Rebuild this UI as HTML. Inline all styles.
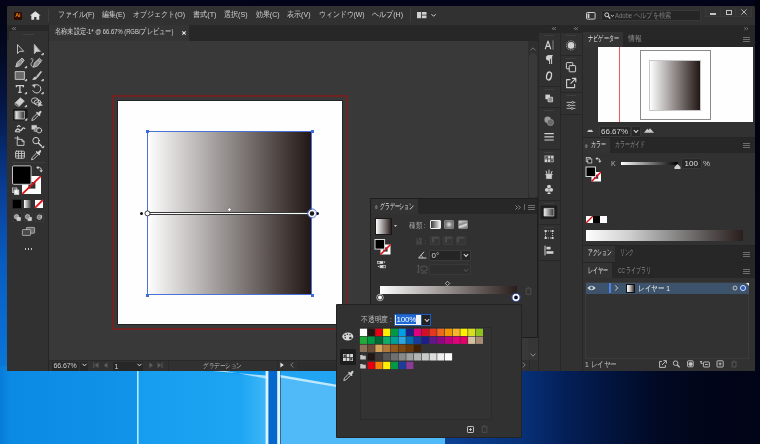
<!DOCTYPE html>
<html lang="ja">
<head>
<meta charset="utf-8">
<title>Adobe Illustrator</title>
<style>
*{box-sizing:border-box;margin:0;padding:0}
html,body{width:760px;height:444px;overflow:hidden;background:#03041a}
body{position:relative;font-family:"Liberation Sans",sans-serif;font-size:8px;color:#d0d0d0;line-height:1}
.a{position:absolute}
.t{position:absolute;white-space:nowrap;line-height:1;font-size:8px;color:#cfcfcf}
svg{position:absolute;overflow:visible}
svg text{font-family:"Liberation Sans",sans-serif}
#root{position:absolute;left:0;top:0;width:760px;height:444px;will-change:transform;opacity:.999}
#wp{left:0;top:0;width:760px;height:444px;background:#02030f}
#wpt{left:0;top:0;width:8px;height:372px;background:linear-gradient(to bottom,#02030f 0,#040c28 60px,#06194a 110px,#0a3f96 190px,#0a5cc0 260px,#0a70d6 340px,#0a7ad8 372px)}
#wptop{left:0;top:0;width:760px;height:7px;background:#03041a}
#wprt{left:754px;top:0;width:6px;height:372px;background:linear-gradient(to bottom,#02030f,#030518)}
#app{left:7px;top:6px;width:748px;height:365px;background:#323232;border-radius:2px 2px 0 0}
#menubar{left:7px;top:6px;width:748px;height:19px;background:#323232;border-radius:2px 2px 0 0}
#strip{left:7px;top:25px;width:748px;height:16px;background:#282828}
#canvas{left:49px;top:41px;width:479px;height:319px;background:#3a3a3a}
#doctab{left:49px;top:25px;width:140px;height:16px;background:#353535}
#tools{left:9px;top:25px;width:39px;height:346px;background:#323232}
#toolhead{left:9px;top:25px;width:39px;height:6px;background:#282828}
#status{left:49px;top:360px;width:489px;height:11px;background:#323232}
#bleed{left:111.7px;top:94.7px;width:236.6px;height:235px;border:2px solid #702424}
#art{left:118px;top:101px;width:224px;height:223.4px;background:#fff;box-shadow:0 0 0 .7px #1c1c1c}
#grect{left:147px;top:131px;width:165.4px;height:164.4px;border:1px solid #4a74d8;background:linear-gradient(to right,#ffffff,#231815)}
.hd{width:2.8px;height:2.8px;background:#3f6ce0}
#gline{left:147px;top:212.1px;width:166px;height:2.6px;background:#fff;border-top:.6px solid #3a3a3a;border-bottom:.6px solid #3a3a3a}
.dot{width:3px;height:3px;border-radius:50%;background:#111}
#vscroll{left:528px;top:41px;width:10px;height:319px;background:#303030}
#dockbg{left:538px;top:25px;width:44px;height:346px;background:#323232}
#rp{left:582px;top:25px;width:173px;height:346px;background:#323232}
.tabbar{position:absolute;background:#282828}
.tabon{position:absolute;background:#343434}
.burger{position:absolute;width:7px;height:5px;border-top:1px solid #6f6f6f;border-bottom:1px solid #6f6f6f}
.burger:after{content:"";position:absolute;left:0;top:1px;width:7px;height:1px;background:#6f6f6f}
.field{position:absolute;background:#282828;border:1px solid #393939;border-radius:1px}
.sw{position:absolute;width:7.2px;height:7.2px}
</style>
</head>
<body>
<div id="root">
<div id="wp" class="a"></div>
<div id="wpt" class="a"></div>
<svg style="left:0;top:366px" width="760" height="78" viewBox="0 366 760 78">
 <defs>
  <linearGradient id="w1" x1="0" x2="1" y1="0" y2="0"><stop offset="0" stop-color="#0a7cd9"/><stop offset=".08" stop-color="#0c8be5"/><stop offset="1" stop-color="#1395eb"/></linearGradient>
  <linearGradient id="w2" x1="0" x2="1" y1="0" y2="0"><stop offset="0" stop-color="#179ef0"/><stop offset=".8" stop-color="#1ea6f4"/><stop offset="1" stop-color="#3fb8f8"/></linearGradient>
  <linearGradient id="w4" x1="0" x2="1" y1="0" y2="0"><stop offset="0" stop-color="rgb(12,66,150)"/><stop offset="0.2413" stop-color="rgb(8,50,122)"/><stop offset="0.3873" stop-color="rgb(5,32,88)"/><stop offset="0.5397" stop-color="rgb(3,20,60)"/><stop offset="0.6889" stop-color="rgb(2,10,36)"/><stop offset="0.8381" stop-color="rgb(2,6,26)"/><stop offset="1" stop-color="rgb(3,5,24)"/></linearGradient>
 </defs>
 <rect x="0" y="366" width="138" height="78" fill="url(#w1)"/>
 <rect x="138" y="366" width="128" height="78" fill="url(#w2)"/>
 <path d="M205 371 L266 371 L266 377.4Z" fill="#0f9af0"/>
 <path d="M212 371 L266 375.6 L266 378.6 L226 371Z" fill="#d4f3ff" opacity=".8"/>
 <rect x="137" y="366" width="1.6" height="78" fill="#b4eaff"/>
 <rect x="265.6" y="366" width="14.6" height="78" fill="#dcf6ff"/>
 <rect x="268.4" y="366" width="8.8" height="78" fill="#0668cc"/>
 <rect x="280.6" y="366" width="165" height="78" fill="#50bbf8"/>
 <path d="M280.6 366 H445.6 V404 L280.6 376Z" fill="#22a6f3"/>
 <path d="M280.6 375 L445.6 403.4 V405.6 L280.6 377.4Z" fill="#d4f3ff" opacity=".85"/>
 <rect x="445" y="366" width="315" height="78" fill="url(#w4)"/>
</svg>
<div id="wptop" class="a"></div>
<div id="wprt" class="a"></div>
<div id="app" class="a"></div>
<div id="menubar" class="a"></div>
<div id="strip" class="a"></div>
<div id="canvas" class="a"></div>
<div id="bleed" class="a"></div>
<div id="art" class="a"></div>
<div id="grect" class="a"></div>
<div class="a hd" style="left:146px;top:130px"></div>
<div class="a hd" style="left:311px;top:130px"></div>
<div class="a hd" style="left:146px;top:294px"></div>
<div class="a hd" style="left:311px;top:294px"></div>
<div id="gline" class="a"></div>
<div class="a dot" style="left:140px;top:211.9px"></div>
<div class="a dot" style="left:316.4px;top:211.9px"></div>
<svg style="left:142px;top:204px" width="180" height="18" viewBox="0 0 180 18">
 <circle cx="5.5" cy="9.4" r="2.5" fill="#fff" stroke="#2a2a2a" stroke-width=".9"/>
 <circle cx="170" cy="9.4" r="3" fill="#1c1a1a" stroke="#f4f6ff" stroke-width="1.5"/>
 <circle cx="170" cy="9.4" r="4.5" fill="none" stroke="#4468c8" stroke-width=".9"/>
 <rect x="86" y="4.3" width="2.8" height="2.8" transform="rotate(45 87.4 5.7)" fill="#fff" stroke="#555" stroke-width=".5"/>
</svg>
<div id="doctab" class="a"></div>
<div id="tools" class="a"></div>
<div id="toolhead" class="a"></div>
<div id="status" class="a"></div>
<div id="vscroll" class="a"></div>
<div id="dockbg" class="a"></div>
<div id="rp" class="a"></div>

<!-- MENUBAR -->
<div class="a" style="left:14px;top:11.7px;width:8.3px;height:8.2px;background:#2e0b02;border-radius:1.5px"></div>
<div class="t" style="left:15.3px;top:13.2px;font-size:5.5px;font-weight:bold;color:#ff8a10;letter-spacing:-.2px">Ai</div>
<svg style="left:30.3px;top:11px" width="10.6" height="9" viewBox="0 0 11 9"><path d="M5.5 0 L11 4.6 L9.6 4.6 L9.6 9 L6.7 9 L6.7 6 L4.3 6 L4.3 9 L1.4 9 L1.4 4.6 L0 4.6Z" fill="#e2e2e2"/></svg>
<div class="a" style="left:48px;top:9px;width:1px;height:13px;background:#3f3f3f;"></div>
<svg style="left:58px;top:10.2px" width="36.5" height="11"><text x="0" y="7.2" textLength="36.5" lengthAdjust="spacingAndGlyphs" font-size="8" fill="#d2d2d2" >ファイル(F)</text></svg>
<svg style="left:102px;top:10.2px" width="23" height="11"><text x="0" y="7.2" textLength="23" lengthAdjust="spacingAndGlyphs" font-size="8" fill="#d2d2d2" >編集(E)</text></svg>
<svg style="left:133px;top:10.2px" width="52" height="11"><text x="0" y="7.2" textLength="52" lengthAdjust="spacingAndGlyphs" font-size="8" fill="#d2d2d2" >オブジェクト(O)</text></svg>
<svg style="left:192.5px;top:10.2px" width="23.5" height="11"><text x="0" y="7.2" textLength="23.5" lengthAdjust="spacingAndGlyphs" font-size="8" fill="#d2d2d2" >書式(T)</text></svg>
<svg style="left:224px;top:10.2px" width="23.5" height="11"><text x="0" y="7.2" textLength="23.5" lengthAdjust="spacingAndGlyphs" font-size="8" fill="#d2d2d2" >選択(S)</text></svg>
<svg style="left:255.5px;top:10.2px" width="23.5" height="11"><text x="0" y="7.2" textLength="23.5" lengthAdjust="spacingAndGlyphs" font-size="8" fill="#d2d2d2" >効果(C)</text></svg>
<svg style="left:287px;top:10.2px" width="23.5" height="11"><text x="0" y="7.2" textLength="23.5" lengthAdjust="spacingAndGlyphs" font-size="8" fill="#d2d2d2" >表示(V)</text></svg>
<svg style="left:318.5px;top:10.2px" width="45.5" height="11"><text x="0" y="7.2" textLength="45.5" lengthAdjust="spacingAndGlyphs" font-size="8" fill="#d2d2d2" >ウィンドウ(W)</text></svg>
<svg style="left:372px;top:10.2px" width="31" height="11"><text x="0" y="7.2" textLength="31" lengthAdjust="spacingAndGlyphs" font-size="8" fill="#d2d2d2" >ヘルプ(H)</text></svg>
<div class="a" style="left:410px;top:9px;width:1px;height:13px;background:#3f3f3f;"></div>
<svg style="left:416.5px;top:11.5px" width="20" height="7" viewBox="0 0 20 7"><rect x="0" y="0" width="4" height="6.2" fill="#d0d0d0"/><rect x="4.8" y="0" width="4.7" height="2.7" fill="#d0d0d0"/><rect x="4.8" y="3.5" width="4.7" height="2.7" fill="#d0d0d0"/><path d="M14.5 2.2 L16.6 4.3 L18.7 2.2" fill="none" stroke="#d0d0d0" stroke-width="1"/></svg>
<svg style="left:585.5px;top:12px" width="10" height="8" viewBox="0 0 10 8"><rect x=".5" y=".5" width="8.6" height="6.6" rx=".8" fill="none" stroke="#cfcfcf" stroke-width="1"/><rect x="1.6" y="1.6" width="1.8" height="4.4" fill="#cfcfcf"/></svg>
<div class="a" style="left:601px;top:10px;width:99.5px;height:10.5px;background:#262626;border:1px solid #3a3a3a;border-radius:1.5px"></div>
<svg style="left:603.5px;top:11.5px" width="11" height="8" viewBox="0 0 11 8"><circle cx="2.8" cy="2.8" r="2" fill="none" stroke="#d6d6d6" stroke-width="1"/><path d="M4.3 4.4 L6.2 6.6" stroke="#d6d6d6" stroke-width="1.3"/><path d="M7 3 L8.4 4.5 L9.8 3" fill="none" stroke="#d6d6d6" stroke-width=".9"/></svg>
<svg style="left:614.5px;top:10.8px" width="56.5" height="10.5"><text x="0" y="6.75" textLength="56.5" lengthAdjust="spacingAndGlyphs" font-size="7.5" fill="#7d7d7d" >Adobe ヘルプを検索</text></svg>
<div class="a" style="left:705px;top:7px;width:15.5px;height:10px;background:#343434;border:1px solid #3a3a3a;border-top:none"></div>
<div class="a" style="left:720.5px;top:7px;width:15.5px;height:10px;background:#343434;border:1px solid #3a3a3a;border-top:none;border-left:none"></div>
<div class="a" style="left:736px;top:7px;width:15.5px;height:10px;background:#343434;border:1px solid #3a3a3a;border-top:none;border-left:none"></div>
<div class="a" style="left:710px;top:13.4px;width:6px;height:1.2px;background:#c4c4c4;"></div>
<div class="a" style="left:725.5px;top:9.8px;width:6.2px;height:4.8px;background:transparent;border:1px solid #c4c4c4"></div>
<svg style="left:741px;top:9px" width="6" height="6" viewBox="0 0 6 6"><path d="M.4 .4 L5.6 5.6 M5.6 .4 L.4 5.6" stroke="#c4c4c4" stroke-width=".9"/></svg>
<svg style="left:54.5px;top:27.3px" width="118.5" height="10.5"><text x="0" y="6.75" textLength="118.5" lengthAdjust="spacingAndGlyphs" font-size="7.5" fill="#d8d8d8" >名称未設定-1* @ 66.67% (RGB/プレビュー)</text></svg>
<svg style="left:182px;top:31px" width="4" height="4" viewBox="0 0 4 4"><path d="M.3 .3 L3.7 3.7 M3.7 .3 L.3 3.7" stroke="#e6e6e6" stroke-width="1.1"/></svg>
<!-- TOOLS -->
<div class="a" style="left:48px;top:25px;width:1px;height:346px;background:#262626;"></div>
<svg style="left:12px;top:27.2px" width="4" height="3.2" viewBox="0 0 5 4"><path d="M2 .4 L.5 2 L2 3.6 M4.5 .4 L3 2 L4.5 3.6" fill="none" stroke="#b0b0b0" stroke-width=".9"/></svg>
<div class="a" style="left:23px;top:34px;width:11px;height:1px;background:#414141;"></div>
<svg style="left:9px;top:25px" width="39" height="240" viewBox="9 25 39 240" fill="none" stroke="#cfcfcf" stroke-width="1" stroke-linejoin="round" stroke-linecap="round">
<path d="M17.5 45 L17.5 53.5 L19.8 51.3 L23.3 51.3 Z" stroke-width=".9"/>
<path d="M34.3 44.6 L34.3 53.8 L36.6 51.4 L40.2 51.4 Z" fill="#cfcfcf" stroke-width=".6"/><path d="M42 54.8 l1.3 0 l0 -1.3z" fill="#adadad"/>
<path d="M16 66.5 L17 62.5 L20.5 59.5 L23 62 L20 65.5 Z M20.8 59.2 L22 58 L24.2 60.2 L23.2 61.6 M16.2 66.3 L19 63.5" stroke-width=".9" fill="#8a8a8a"/><path d="M25.3 67.8 l1.3 0 l0 -1.3z" fill="#adadad"/>
<path d="M33.5 66.8 L34.5 62.8 L38 59.8 L40.5 62.3 L37.5 65.8 Z M38.3 59.5 L39.5 58.3 L41.7 60.5 L40.7 61.9" stroke-width=".9" fill="#8a8a8a"/><path d="M31 59 Q32.5 57.6 33 59.6 Q32.6 62 31.2 63.4 Q30.4 66.6 33.3 66.9" stroke-width=".8"/>
<rect x="15.6" y="71.6" width="8.8" height="7.8" fill="#6b6b6b" stroke-width=".9"/><path d="M25.3 80.8 l1.3 0 l0 -1.3z" fill="#adadad"/>
<path d="M40.8 71.2 L36.6 76.2 L37.8 77.2 L41.6 72 Z" fill="#cfcfcf" stroke-width=".5"/><path d="M36 76.8 Q33.6 77 32.6 79.6 Q35.6 80.2 37.2 77.8 Z" fill="#cfcfcf" stroke-width=".5"/><path d="M42 80.8 l1.3 0 l0 -1.3z" fill="#adadad"/>
<path d="M16.4 87.2 V85.6 H23.4 V87.2 M19.9 85.6 V92.4 M18.2 92.4 H21.6" stroke-width="1.3" stroke-linecap="butt" stroke-linejoin="miter"/><path d="M25.3 93.8 l1.3 0 l0 -1.3z" fill="#adadad"/>
<path d="M34.2 85.4 A4.2 4.2 0 1 1 32.8 90.6" stroke-width="1"/><path d="M32.2 85 L35.4 84.4 L34.6 87.4 Z" fill="#cfcfcf" stroke-width=".4"/><path d="M42 93.8 l1.3 0 l0 -1.3z" fill="#adadad"/>
<path d="M15.4 102.6 L20.4 97.8 L24.4 101 L19.6 106 Z" fill="#cfcfcf" stroke-width=".6"/><path d="M15.8 103 L19.4 106 L17.6 106.2 L15 104.4 Z" fill="#555" stroke-width=".6"/><path d="M25.3 106.8 l1.3 0 l0 -1.3z" fill="#adadad"/>
<ellipse cx="35" cy="100.6" rx="3.6" ry="2.8" stroke-width=".9"/><ellipse cx="37.6" cy="102.4" rx="3.4" ry="2.6" stroke-width=".9"/><path d="M38.6 101.6 L38.6 106.8 L40 105.4 L42.2 105.4 Z" fill="#cfcfcf" stroke-width=".5"/>
<rect x="13" y="109" width="14.6" height="11.6" rx="1" fill="#1c1c1c" stroke="none"/>
<defs><linearGradient id="gt" x1="0" x2="1" y1="0" y2="0"><stop offset="0" stop-color="#f4f4f4"/><stop offset="1" stop-color="#2a2a2a"/></linearGradient></defs>
<rect x="15.4" y="111.2" width="9" height="7.8" fill="url(#gt)" stroke="#d8d8d8" stroke-width=".7"/><path d="M25.6 120.2 l1.3 0 l0 -1.3z" fill="#adadad"/>
<g transform="translate(36.5 115.5)"><path d="M-4.6 4.6 L-4 2.6 L0.6 -2 L2.2 -0.4 L-2.4 4.2 Z" stroke-width=".9"/><path d="M0.4 -3 L3.2 -0.2 M1.6 -1.6 L3.4 -3.6 Q4.8 -4.8 4 -3 L2.4 -1" stroke-width="1.4"/></g>
<path d="M15.4 131.4 Q17 127.6 19.2 129.8 Q20.8 131.6 22.4 128.6 Q23.4 127 24.8 128.6 M17.4 126.6 Q18.6 124.6 20 126.4 M15.6 131.6 L19.6 131.8" stroke-width="1.3"/>
<rect x="32" y="125.4" width="4.6" height="3.8" fill="#cfcfcf" stroke-width=".5"/><rect x="34.6" y="127.6" width="4.6" height="3.8" fill="#8a8a8a" stroke-width=".6"/><circle cx="39.2" cy="130.4" r="2.5" fill="#323232" stroke-width=".9"/>
<path d="M17.6 136.6 V139.2 M15 138 H19 M17.6 139.4 H22 L24 141.4 V145.4 H17.6 Z M22 139.4 V141.4 H24" stroke-width=".9"/>
<circle cx="36" cy="140.6" r="3.2" stroke-width="1"/><path d="M38.4 143 L41.4 146" stroke-width="1.5"/><path d="M42.4 147.6 l1.3 0 l0 -1.3z" fill="#adadad"/>
<rect x="15.6" y="151.2" width="8.8" height="7" rx=".8" stroke-width=".9"/><path d="M18.5 151.2 V158.2 M21.5 151.2 V158.2 M15.6 153.5 H24.4 M15.6 155.9 H24.4" stroke-width=".8"/>
<g transform="translate(36.2 154.8)"><path d="M-4.6 4.6 L-4 2.6 L0.6 -2 L2.2 -0.4 L-2.4 4.2 Z" stroke-width=".9"/><path d="M0.4 -3 L3.2 -0.2 M1.6 -1.6 L3.4 -3.6 Q4.8 -4.8 4 -3 L2.4 -1" stroke-width="1.4"/></g>
</svg>
<div class="a" style="left:12px;top:162px;width:33px;height:1px;background:#3d3d3d;"></div>
<svg style="left:9px;top:163px" width="39" height="34" viewBox="9 163 39 34">
 <rect x="22" y="176" width="19" height="18" fill="#fff"/>
 <rect x="28.4" y="182" width="7" height="6.6" fill="#323232"/>
 <path d="M22.4 193.8 L40.8 176.2" stroke="#e0141c" stroke-width="1.8"/>
 <rect x="12.5" y="165.9" width="18.6" height="18.4" rx="1.2" fill="#000" stroke="#c4c4c4" stroke-width="1"/>
 <path d="M38 167.6 H39.4 Q41.2 167.6 41.2 169.4 V170.6" fill="none" stroke="#cfcfcf" stroke-width="1"/><path d="M38.4 165.8 L36.2 167.6 L38.4 169.4Z M39.4 170.2 L41.2 172.4 L43 170.2Z" fill="#cfcfcf"/>
 <rect x="12.4" y="188" width="4.4" height="4.4" fill="#222" stroke="#cfcfcf" stroke-width=".8"/>
 <rect x="14.4" y="190" width="4.4" height="4.4" fill="#fff" stroke="#cfcfcf" stroke-width=".8"/>
 <circle cx="15.6" cy="191.2" r="2.2" fill="none" stroke="#cfcfcf" stroke-width=".7"/>
</svg>
<div class="a" style="left:12px;top:199px;width:10px;height:10px;background:#262626;border-radius:1px"></div>
<div class="a" style="left:13px;top:200.2px;width:8.2px;height:7.8px;background:#000;"></div>
<div class="a" style="left:24.4px;top:200.2px;width:7.4px;height:7.8px;background:linear-gradient(to right,#fff,#222);"></div>
<div class="a" style="left:35.2px;top:200.2px;width:7.8px;height:7.8px;background:#fff;"></div>
<svg style="left:35.2px;top:200.2px" width="7.8" height="7.8" viewBox="0 0 7.8 7.8"><path d="M0 7.8 L7.8 0" stroke="#e0141c" stroke-width="1.8"/></svg>
<div class="a" style="left:12.6px;top:213px;width:9.6px;height:9.4px;background:#262626;border:1px solid #3a3a3a"></div>
<div class="a" style="left:23.6px;top:213px;width:9.6px;height:9.4px;background:#303030;border:1px solid #3a3a3a"></div>
<div class="a" style="left:34.6px;top:213px;width:9.6px;height:9.4px;background:#303030;border:1px solid #3a3a3a"></div>
<svg style="left:12px;top:213px" width="34" height="10" viewBox="12 213 34 10" stroke="#cfcfcf" stroke-width=".7">
 <circle cx="16.6" cy="216.8" r="2.3" fill="#9a9a9a"/><rect x="17" y="217.4" width="3.4" height="3.2" fill="#cfcfcf"/>
 <rect x="28" y="217.4" width="3.4" height="3.2" fill="#cfcfcf"/><circle cx="27.6" cy="216.8" r="2.3" fill="#8a8a8a"/>
 <circle cx="39.4" cy="217.2" r="2.3" fill="#777"/><path d="M39.4 217.2 h2.2 v-2.2" fill="none"/>
</svg>
<svg style="left:22px;top:227px" width="13" height="9" viewBox="0 0 13 9" stroke="#bdbdbd" stroke-width=".8">
 <rect x="4.4" y=".4" width="8.2" height="5.8" rx=".6" fill="#6a6a6a"/>
 <rect x=".4" y="2.6" width="8.2" height="5.8" rx=".6" fill="#4a4a4a"/>
</svg>
<div class="a" style="left:24.6px;top:248.4px;width:1.6px;height:1.6px;background:#c8c8c8;"></div>
<div class="a" style="left:27.6px;top:248.4px;width:1.6px;height:1.6px;background:#c8c8c8;"></div>
<div class="a" style="left:30.6px;top:248.4px;width:1.6px;height:1.6px;background:#c8c8c8;"></div>
<!-- STATUS BAR -->
<div class="a" style="left:49px;top:360px;width:489px;height:1px;background:#2a2a2a;"></div>
<div class="a" style="left:52px;top:361.5px;width:27px;height:9.5px;background:#282828;"></div>
<div class="t" style="left:53.5px;top:362.3px;font-size:7px;color:#d0d0d0;letter-spacing:-.1px">66.67%</div>
<div class="a" style="left:80px;top:361.5px;width:8px;height:9.5px;background:#282828;"></div>
<svg style="left:81.5px;top:363.3px" width="5" height="4" viewBox="0 0 5 4"><path d="M.5 .8 L2.5 2.9 L4.5 .8" fill="none" stroke="#d8d8d8" stroke-width="1"/></svg>
<svg style="left:92px;top:361.8px" width="72" height="7" viewBox="92 363 72 7" fill="#5e5e5e"><path d="M93.4 363.6 v5.4 h.9 v-5.4z M98.4 363.6 v5.4 L94.8 366.3z M107.4 363.6 v5.4 L103.8 366.3z M149.4 363.6 v5.4 L153 366.3z M157.6 363.6 v5.4 L161.2 366.3z M161.6 363.6 v5.4 h.9 v-5.4z"/></svg>
<div class="a" style="left:112.5px;top:361.5px;width:22px;height:9.5px;background:#282828;"></div>
<div class="t" style="left:114.5px;top:362.6px;font-size:7px;color:#d0d0d0">1</div>
<div class="a" style="left:135px;top:361.5px;width:8px;height:9.5px;background:#282828;"></div>
<svg style="left:136.5px;top:363.3px" width="5" height="4" viewBox="0 0 5 4"><path d="M.5 .8 L2.5 2.9 L4.5 .8" fill="none" stroke="#d8d8d8" stroke-width="1"/></svg>
<div class="a" style="left:168px;top:361px;width:1px;height:10px;background:#2a2a2a;"></div>
<div class="a" style="left:277px;top:361px;width:1px;height:10px;background:#2a2a2a;"></div>
<svg style="left:202.5px;top:361.5px" width="39" height="10"><text x="0" y="6.3" textLength="39" lengthAdjust="spacingAndGlyphs" font-size="7" fill="#bdbdbd" >グラデーション</text></svg>
<svg style="left:280px;top:362px" width="4" height="6" viewBox="0 0 4 6"><path d="M.4 .4 V5.6 L3.8 3Z" fill="#e0e0e0"/></svg>
<svg style="left:290px;top:362px" width="4" height="6" viewBox="0 0 4 6"><path d="M3.2 .6 L.8 3 L3.2 5.4" fill="none" stroke="#8a8a8a" stroke-width=".9"/></svg>
<div class="a" style="left:297px;top:361.5px;width:232px;height:9.5px;background:#2e2e2e;"></div>
<!-- DOCK -->
<div class="a" style="left:528.6px;top:53px;width:8.8px;height:145px;background:#3a3a3a;border-radius:4.4px"></div>
<svg style="left:530px;top:47px" width="6" height="4" viewBox="0 0 6 4"><path d="M.5 3.4 L3 .8 L5.5 3.4" fill="none" stroke="#7a7a7a" stroke-width=".9"/></svg>
<div class="a" style="left:538px;top:25px;width:44px;height:7px;background:#282828;"></div>
<div class="a" style="left:537.5px;top:25px;width:1px;height:346px;background:#282828;"></div>
<div class="a" style="left:559.5px;top:32px;width:1px;height:339px;background:#282828;"></div>
<div class="a" style="left:581.5px;top:32px;width:1px;height:339px;background:#282828;"></div>
<svg style="left:551.5px;top:27.2px" width="4" height="3.2" viewBox="0 0 5 4"><path d="M2 .4 L.5 2 L2 3.6 M4.5 .4 L3 2 L4.5 3.6" fill="none" stroke="#b0b0b0" stroke-width=".9"/></svg>
<svg style="left:573.5px;top:27.2px" width="4" height="3.2" viewBox="0 0 5 4"><path d="M2 .4 L.5 2 L2 3.6 M4.5 .4 L3 2 L4.5 3.6" fill="none" stroke="#b0b0b0" stroke-width=".9"/></svg>
<div class="a" style="left:538px;top:32px;width:21.5px;height:1px;background:#282828;"></div>
<div class="a" style="left:544px;top:34.5px;width:10px;height:1px;background:#3f3f3f;"></div>
<div class="a" style="left:538px;top:86px;width:21.5px;height:1px;background:#282828;"></div>
<div class="a" style="left:544px;top:88.5px;width:10px;height:1px;background:#3f3f3f;"></div>
<div class="a" style="left:538px;top:107px;width:21.5px;height:1px;background:#282828;"></div>
<div class="a" style="left:544px;top:109.5px;width:10px;height:1px;background:#3f3f3f;"></div>
<div class="a" style="left:538px;top:149px;width:21.5px;height:1px;background:#282828;"></div>
<div class="a" style="left:544px;top:151.5px;width:10px;height:1px;background:#3f3f3f;"></div>
<div class="a" style="left:538px;top:200px;width:21.5px;height:1px;background:#282828;"></div>
<div class="a" style="left:544px;top:202.5px;width:10px;height:1px;background:#3f3f3f;"></div>
<div class="a" style="left:538px;top:224px;width:21.5px;height:1px;background:#282828;"></div>
<div class="a" style="left:544px;top:226.5px;width:10px;height:1px;background:#3f3f3f;"></div>
<div class="a" style="left:538px;top:260px;width:21.5px;height:1px;background:#282828;"></div>
<div class="a" style="left:560px;top:32px;width:21.5px;height:1px;background:#282828;"></div>
<div class="a" style="left:566px;top:34.5px;width:10px;height:1px;background:#3f3f3f;"></div>
<div class="a" style="left:560px;top:55px;width:21.5px;height:1px;background:#282828;"></div>
<div class="a" style="left:566px;top:57.5px;width:10px;height:1px;background:#3f3f3f;"></div>
<div class="a" style="left:560px;top:92px;width:21.5px;height:1px;background:#282828;"></div>
<div class="a" style="left:566px;top:94.5px;width:10px;height:1px;background:#3f3f3f;"></div>
<div class="a" style="left:560px;top:114px;width:21.5px;height:1px;background:#282828;"></div>
<svg style="left:538px;top:32px" width="44" height="232" viewBox="538 32 44 232" fill="none" stroke="#d2d2d2" stroke-width="1" stroke-linejoin="round">
<path d="M545.2 49.2 L548 41 L550.8 49.2 M546.2 46.4 H549.8" stroke-width="1.1"/><path d="M553 40.4 V49.6" stroke-width=".7" stroke="#a8a8a8"/>
<path d="M549.6 55.6 V64 M551.6 55.6 V64 M552.6 55.6 H548.6 A2.3 2.3 0 0 0 548.6 60.2 H549.6" stroke-width="1" fill="#d2d2d2"/>
<ellipse cx="549" cy="76" rx="2.4" ry="4" transform="rotate(12 549 76)" stroke-width="1.3"/>
<rect x="545.4" y="94.6" width="4.6" height="4.6" fill="#d2d2d2" stroke="none"/><rect x="548" y="97.2" width="4.6" height="4.6" fill="#8c8c8c" stroke="#d2d2d2" stroke-width=".8"/>
<circle cx="547.6" cy="119.8" r="3.2" fill="#9a9a9a" stroke="none"/><circle cx="550.4" cy="122.4" r="3.2" fill="#6a6a6a" stroke="#aaa" stroke-width=".5"/>
<path d="M544.4 133.6 H553.8 M544.4 136.8 H553.8 M544.4 140 H553.8" stroke-width="1.2"/>
<rect x="544.6" y="155.6" width="9" height="6.6" fill="#d2d2d2" stroke="none"/><path d="M547.6 155.6 v6.6 M550.6 155.6 v6.6 M544.6 158.9 h9" stroke="#333" stroke-width=".7"/><rect x="545.2" y="156.2" width="2" height="2.2" fill="#555" stroke="none"/><rect x="551" y="159.4" width="2" height="2.2" fill="#555" stroke="none"/>
<path d="M546.4 174.6 H551.6 V178.6 H546.4 Z" fill="#d2d2d2" stroke-width=".6"/><path d="M549 174.4 V169.6 M547.2 174.2 L546 170.8 M550.8 174.2 L552.2 171" stroke-width="1"/><path d="M545.4 174.6 H552.6" stroke-width="1"/>
<circle cx="549" cy="186.6" r="1.9" fill="#d2d2d2" stroke="none"/><circle cx="546.8" cy="189.8" r="1.9" fill="#d2d2d2" stroke="none"/><circle cx="551.2" cy="189.8" r="1.9" fill="#d2d2d2" stroke="none"/><path d="M549 189 L549 193 M547.4 193.4 H550.6" stroke-width="1.1"/>
<rect x="540.6" y="205.4" width="16.6" height="13.6" rx="1" fill="#1e1e1e" stroke="none"/>
<defs><linearGradient id="gd" x1="0" x2="1" y1="0" y2="0"><stop offset="0" stop-color="#f0f0f0"/><stop offset="1" stop-color="#333"/></linearGradient></defs>
<rect x="544" y="208.4" width="9.8" height="7.6" fill="url(#gd)" stroke="#d0d0d0" stroke-width=".7"/>
<rect x="545.6" y="231" width="7" height="7" stroke-dasharray="1.2 1" stroke-width=".9"/><path d="M544.6 230 h2 v2 h-2z M551.6 230 h2 v2 h-2z M544.6 237 h2 v2 h-2z M551.6 237 h2 v2 h-2z" fill="#d2d2d2" stroke="none"/>
<path d="M545 245.6 V255.4" stroke-width="1"/><rect x="546.4" y="246.8" width="4.2" height="2.6" fill="#d2d2d2" stroke="none"/><rect x="546.4" y="251.2" width="7" height="2.6" fill="#d2d2d2" stroke="none"/>
<circle cx="571" cy="45.4" r="3.3" fill="#d2d2d2" stroke="none"/><circle cx="571" cy="45.4" r="4.6" stroke-width=".8" stroke-dasharray=".9 .9"/>
<rect x="566.4" y="62.6" width="6.4" height="6.2" rx=".6" stroke-width="1"/><rect x="569.2" y="65.6" width="6.4" height="6.2" rx=".6" fill="#323232" stroke-width="1"/>
<path d="M570.4 79.6 H566.6 V87.6 H574.6 V84" stroke-width="1.1"/><path d="M570.6 83.6 L575.4 78.8 M572 78.4 H575.8 V82.2" stroke-width="1.1"/>
<path d="M566.6 102.4 H575.4 M566.6 105.4 H575.4 M566.6 108.4 H575.4" stroke-width=".8"/><circle cx="572.6" cy="102.4" r="1" fill="#323232" stroke-width=".7"/><circle cx="569.2" cy="105.4" r="1" fill="#323232" stroke-width=".7"/><circle cx="572" cy="108.4" r="1" fill="#323232" stroke-width=".7"/>
</svg>
<!-- RIGHT PANELS -->
<div class="a" style="left:582px;top:25px;width:173px;height:7px;background:#282828;"></div>
<svg style="left:743.5px;top:27.2px" width="4.6" height="3.2" viewBox="0 0 6 4"><path d="M.5 .4 L2.3 2 L.5 3.6 M3.3 .4 L5.1 2 L3.3 3.6" fill="none" stroke="#a8a8a8" stroke-width=".8"/></svg>
<div class="tabbar" style="left:582px;top:32px;width:173px;height:15px"></div>
<div class="tabon" style="left:583px;top:32px;width:40px;height:15px"></div>
<svg style="left:587.5px;top:33.7px" width="31" height="10.5"><text x="0" y="6.75" textLength="31" lengthAdjust="spacingAndGlyphs" font-size="7.5" fill="#e6e6e6" >ナビゲーター</text></svg>
<svg style="left:628px;top:33.7px" width="13.5" height="10.5"><text x="0" y="6.75" textLength="13.5" lengthAdjust="spacingAndGlyphs" font-size="7.5" fill="#8f8f8f" >情報</text></svg>
<div class="burger" style="left:743px;top:37px"></div>
<div class="a" style="left:598px;top:47px;width:155px;height:75px;background:#fff;"></div>
<div class="a" style="left:618.5px;top:47px;width:1px;height:75px;background:#ee5a5a;"></div>
<div class="a" style="left:640px;top:50px;width:71px;height:70px;background:#fff;border:1px solid #8c8c8c"></div>
<div class="a" style="left:649px;top:60px;width:52px;height:51px;background:linear-gradient(to right,#ffffff,#231815);border:1px solid #c9c9c9"></div>
<div class="field" style="left:599px;top:126px;width:32px;height:11px"></div>
<div class="t" style="left:601px;top:127.5px;font-size:8px;color:#d8d8d8">66.67%</div>
<div class="field" style="left:631px;top:126px;width:10px;height:11px"></div>
<svg style="left:633px;top:129px" width="6" height="5" viewBox="0 0 6 5"><path d="M.8 1 L3 3.4 L5.2 1" fill="none" stroke="#d8d8d8" stroke-width="1.1"/></svg>
<svg style="left:587px;top:129.4px" width="6.4" height="3" viewBox="0 0 6.4 3"><path d="M0 3 L2 .6 L3.2 1.3 L4.4 .6 L6.4 3Z" fill="#c9c9c9"/></svg>
<svg style="left:644px;top:128.2px" width="10" height="4.8" viewBox="0 0 10 4.8"><path d="M0 4.8 L3.2 .8 L4.6 2 L6 .3 L10 4.8Z" fill="#c9c9c9"/></svg>
<div class="a" style="left:582px;top:137px;width:173px;height:1px;background:#262626;"></div>
<div class="tabbar" style="left:582px;top:138px;width:173px;height:15px"></div>
<div class="tabon" style="left:583px;top:138px;width:27px;height:15px"></div>
<svg style="left:585.2px;top:143.6px" width="2.6" height="4.4" viewBox="0 0 2.6 4.4"><path d="M1.3 .3 L2.3 1.7 H.3Z M1.3 4.1 L2.3 2.7 H.3Z" fill="none" stroke="#a8a8a8" stroke-width=".5"/></svg>
<svg style="left:591px;top:140.1px" width="15" height="10.5"><text x="0" y="6.75" textLength="15" lengthAdjust="spacingAndGlyphs" font-size="7.5" fill="#e6e6e6" >カラー</text></svg>
<svg style="left:615px;top:140.1px" width="30" height="10.5"><text x="0" y="6.75" textLength="30" lengthAdjust="spacingAndGlyphs" font-size="7.5" fill="#8f8f8f" >カラーガイド</text></svg>
<div class="burger" style="left:743px;top:143px"></div>
<div class="t" style="left:611px;top:159.5px;font-size:7px;color:#b5b5b5">K</div>
<div class="a" style="left:621px;top:162px;width:57px;height:2.5px;background:linear-gradient(to right,#fff,#000);"></div>
<svg style="left:674px;top:164px" width="7" height="5" viewBox="0 0 7 5"><path d="M3.5 0 L6.5 3 L6.5 5 L.5 5 L.5 3Z" fill="#d0d0d0"/></svg>
<div class="field" style="left:681px;top:158px;width:21px;height:11px"></div>
<div class="t" style="left:684.5px;top:160px;font-size:8px;color:#e0e0e0">100</div>
<div class="t" style="left:703px;top:160px;font-size:8px;color:#c8c8c8">%</div>
<svg style="left:585px;top:156px" width="20" height="28" viewBox="0 0 20 28">
 <rect x="6.5" y="16" width="9.5" height="9.5" fill="#fff"/>
 <rect x="9.2" y="18.7" width="4" height="4" fill="#323232"/>
 <path d="M6.5 25.5 L16 16" stroke="#e0141c" stroke-width="1.6"/>
 <rect x="1" y="11" width="9.5" height="9.5" fill="#000" stroke="#d8d8d8" stroke-width="1"/>
 <rect x="1.2" y="1.4" width="4" height="4" fill="none" stroke="#cfcfcf" stroke-width=".8"/>
 <rect x="2.8" y="3" width="4" height="4" fill="#222" stroke="#cfcfcf" stroke-width=".8"/>
 <path d="M12 2.6 H13.2 Q14.8 2.6 14.8 4.2 V5.2" fill="none" stroke="#cfcfcf" stroke-width=".9"/><path d="M12.4 1 L10.4 2.6 L12.4 4.2Z M13.2 4.8 L14.8 6.8 L16.4 4.8Z" fill="#cfcfcf"/>
</svg>
<div class="a" style="left:586px;top:216px;width:7px;height:7px;background:#fff;"></div>
<svg style="left:586px;top:216px" width="7" height="7" viewBox="0 0 7 7"><path d="M0 7 L7 0" stroke="#e0141c" stroke-width="1.5"/></svg>
<div class="a" style="left:593px;top:216px;width:7px;height:7px;background:#000;"></div>
<div class="a" style="left:600px;top:216px;width:7px;height:7px;background:#fff;"></div>
<div class="a" style="left:586px;top:229.5px;width:157px;height:11.5px;background:linear-gradient(to right,#ffffff 0%,#cfcfcf 28%,#959494 52%,#5c5857 76%,#2a1f1c 100%);"></div>
<div class="a" style="left:582px;top:245px;width:173px;height:1px;background:#262626;"></div>
<div class="tabbar" style="left:582px;top:246px;width:173px;height:16px"></div>
<div class="tabon" style="left:583px;top:246px;width:32px;height:16px"></div>
<svg style="left:587.6px;top:248.3px" width="23.5" height="10.5"><text x="0" y="6.75" textLength="23.5" lengthAdjust="spacingAndGlyphs" font-size="7.5" fill="#e6e6e6" >アクション</text></svg>
<svg style="left:620px;top:248.3px" width="14" height="10.5"><text x="0" y="6.75" textLength="14" lengthAdjust="spacingAndGlyphs" font-size="7.5" fill="#8f8f8f" >リンク</text></svg>
<div class="burger" style="left:743px;top:252px"></div>
<div class="a" style="left:582px;top:262px;width:173px;height:1.4px;background:#262626;"></div>
<div class="tabbar" style="left:582px;top:263px;width:173px;height:15px"></div>
<div class="tabon" style="left:583px;top:263px;width:29px;height:15px"></div>
<svg style="left:588.2px;top:265.6px" width="20.3" height="10.5"><text x="0" y="6.75" textLength="20.3" lengthAdjust="spacingAndGlyphs" font-size="7.5" fill="#e6e6e6" >レイヤー</text></svg>
<svg style="left:618px;top:265.6px" width="33" height="10.5"><text x="0" y="6.75" textLength="33" lengthAdjust="spacingAndGlyphs" font-size="7.5" fill="#8f8f8f" >CC ライブラリ</text></svg>
<div class="burger" style="left:743px;top:269px"></div>
<div class="a" style="left:585px;top:282px;width:164px;height:77px;background:#333;border:1px solid #3b3b3b"></div>
<div class="a" style="left:586px;top:282.5px;width:163px;height:11px;background:#3d546c;"></div>
<div class="a" style="left:609px;top:283px;width:1.5px;height:10px;background:#4f7fe8;"></div>
<svg style="left:587px;top:285px" width="9" height="6" viewBox="0 0 9 6"><path d="M.3 3 Q4.5 -1.6 8.7 3 Q4.5 7.6 .3 3Z" fill="#d6d6d6"/><circle cx="4.5" cy="3" r="1.4" fill="#3d546c"/></svg>
<svg style="left:614px;top:285px" width="5" height="6" viewBox="0 0 5 6"><path d="M1.2 .6 L3.8 3 L1.2 5.4" fill="none" stroke="#d6d6d6" stroke-width="1"/></svg>
<div class="a" style="left:625.5px;top:283.5px;width:9px;height:9.5px;background:linear-gradient(to right,#fff,#c0bdbd 45%,#3a302e);border:.5px solid #111"></div>
<svg style="left:638px;top:284px" width="32" height="11"><text x="0" y="7.2" textLength="32" lengthAdjust="spacingAndGlyphs" font-size="8" fill="#f0f0f0" >レイヤー 1</text></svg>
<svg style="left:730px;top:283px" width="20" height="10" viewBox="0 0 20 10">
 <circle cx="5" cy="5" r="2" fill="none" stroke="#d0d0d0" stroke-width=".9"/>
 <circle cx="13" cy="5" r="2.6" fill="#2a5fd8" stroke="#e8e8e8" stroke-width=".9"/>
 <path d="M16 0 L19 0 L19 3Z" fill="#e8e8e8"/>
</svg>
<svg style="left:585px;top:360px" width="32" height="11"><text x="0" y="7.2" textLength="32" lengthAdjust="spacingAndGlyphs" font-size="8" fill="#c4c4c4" >1 レイヤー</text></svg>
<svg style="left:659px;top:360px" width="82" height="8" viewBox="0 0 82 8" fill="none" stroke="#c8c8c8" stroke-width=".9">
 <path d="M3 1.4 H.6 V7.4 H6.4 V5 M3 5 L7 1 M4.4 .6 H7.4 V3.6"/>
 <circle cx="16.6" cy="3.2" r="2.3"/><path d="M18.4 5 L20.6 7.4" stroke-width="1.3"/>
 <rect x="28.6" y=".8" width="5.6" height="6" rx=".8"/><circle cx="31.6" cy="4" r="1.6" fill="#c8c8c8"/>
 <path d="M42 1 v2.4 h1.6 M42 1 l-.9 .9 M42 1 l.9 .9"/><rect x="44.4" y="2" width="6" height="5" rx=".6"/><path d="M46 4.5 h2.8"/>
 <rect x="58" y=".8" width="6.2" height="6.2" rx=".6"/><path d="M61.1 2.4 v3 M59.6 3.9 h3"/>
 <path d="M72.6 2 h5 M73.2 2 v5 h3.8 v-5 M74.4 1 h1.6" stroke="#5a5a5a"/>
</svg>
<!-- GRADIENT PANEL -->
<div class="a" style="left:370px;top:197.5px;width:168px;height:140px;background:#1f1f1f;"></div>
<div class="a" style="left:371px;top:198.5px;width:166px;height:138px;background:#323232;"></div>
<div class="tabbar" style="left:371px;top:198.5px;width:166px;height:15.5px"></div>
<div class="tabon" style="left:371px;top:198.5px;width:46.5px;height:15.5px"></div>
<svg style="left:374.6px;top:204.6px" width="2.6" height="4.4" viewBox="0 0 2.6 4.4"><path d="M1.3 .3 L2.3 1.7 H.3Z M1.3 4.1 L2.3 2.7 H.3Z" fill="none" stroke="#a8a8a8" stroke-width=".5"/></svg>
<svg style="left:380px;top:202px" width="34" height="10.5"><text x="0" y="6.75" textLength="34" lengthAdjust="spacingAndGlyphs" font-size="7.5" fill="#e6e6e6" >グラデーション</text></svg>
<svg style="left:515px;top:204.5px" width="6" height="5" viewBox="0 0 6 5"><path d="M.5 .5 L2.5 2.5 L.5 4.5 M3.3 .5 L5.3 2.5 L3.3 4.5" fill="none" stroke="#9a9a9a" stroke-width=".8"/></svg>
<div class="a" style="left:524px;top:204px;width:1px;height:6px;background:#6a6a6a;"></div>
<div class="burger" style="left:528px;top:204.5px"></div>
<div class="a" style="left:374.5px;top:218px;width:17px;height:17px;background:linear-gradient(to right,#ffffff,#2a1f1c);border:.5px solid #1a1a1a"></div>
<svg style="left:393.8px;top:225.4px" width="3" height="2" viewBox="0 0 3 2"><path d="M0 0 H3 L1.5 2Z" fill="#c8c8c8"/></svg>
<svg style="left:409px;top:220.5px" width="16.5" height="10.5"><text x="0" y="6.75" textLength="16.5" lengthAdjust="spacingAndGlyphs" font-size="7.5" fill="#a8a8a8" >種類 :</text></svg>
<div class="a" style="left:430.4px;top:219.6px;width:10.2px;height:9.8px;background:linear-gradient(to right,#3a3a3a,#f2f2f2);border-radius:1px;border:1px solid #ececec"></div>
<div class="a" style="left:444.2px;top:219.6px;width:9.8px;height:9.8px;background:radial-gradient(circle,#e4e4e4 0%,#8a8a8a 55%,#5a5a5a 100%);border-radius:1px;border:1px solid #828282"></div>
<div class="a" style="left:457.8px;top:219.6px;width:9.8px;height:9.8px;background:linear-gradient(160deg,#d8d8d8 0%,#8a8a8a 45%,#e0e0e0 60%,#6a6a6a 100%);border-radius:1px;border:1px solid #828282"></div>
<svg style="left:373px;top:238px" width="20" height="20" viewBox="373 238 20 20">
 <rect x="380.5" y="244.5" width="10" height="10" fill="#fff"/>
 <rect x="383.4" y="247.4" width="4.2" height="4.2" fill="#323232"/>
 <path d="M380.5 254.5 L390.5 244.5" stroke="#e0141c" stroke-width="1.6"/>
 <rect x="375" y="239.5" width="9.6" height="9.6" fill="#000" stroke="#d8d8d8" stroke-width="1"/>
</svg>
<svg style="left:415.5px;top:237px" width="10" height="10.5"><text x="0" y="6.75" textLength="10" lengthAdjust="spacingAndGlyphs" font-size="7.5" fill="#5c5c5c" >線 :</text></svg>
<div class="a" style="left:430.4px;top:235.8px;width:9.6px;height:9px;background:#363636;border-radius:1px;border:1px solid #3e3e3e"></div>
<svg style="left:431.8px;top:237.4px" width="7" height="6" viewBox="0 0 7 6"><path d="M1 5.6 V1 H6.6" fill="none" stroke="#4e4e4e" stroke-width="1.7"/></svg>
<div class="a" style="left:443.2px;top:235.8px;width:9.6px;height:9px;background:#363636;border-radius:1px;border:1px solid #3e3e3e"></div>
<svg style="left:444.6px;top:237.4px" width="7" height="6" viewBox="0 0 7 6"><path d="M1 5.6 V1 H6.6" fill="none" stroke="#4e4e4e" stroke-width="1.7"/></svg>
<div class="a" style="left:456px;top:235.8px;width:9.6px;height:9px;background:#363636;border-radius:1px;border:1px solid #3e3e3e"></div>
<svg style="left:457.4px;top:237.4px" width="7" height="6" viewBox="0 0 7 6"><path d="M1 5.6 V1 H6.6" fill="none" stroke="#4e4e4e" stroke-width="1.7"/></svg>
<svg style="left:418px;top:251px" width="9" height="8" viewBox="0 0 9 8"><path d="M.6 7 L6 .8 M.6 7 H8.4" fill="none" stroke="#cfcfcf" stroke-width="1"/><path d="M4.4 7 A3.6 3.6 0 0 0 3.2 4.2" fill="none" stroke="#cfcfcf" stroke-width=".8"/></svg>
<div class="a" style="left:429px;top:249.5px;width:31.5px;height:11px;background:#262626;border:1px solid #3c3c3c;border-radius:1px"></div>
<div class="t" style="left:431.5px;top:251.5px;font-size:8px;color:#d8d8d8">0&deg;</div>
<div class="a" style="left:461px;top:249.5px;width:10px;height:11px;background:#262626;border:1px solid #3c3c3c;border-radius:1px"></div>
<svg style="left:463px;top:253px" width="6" height="5" viewBox="0 0 6 5"><path d="M.8 1 L3 3.4 L5.2 1" fill="none" stroke="#d8d8d8" stroke-width="1.1"/></svg>
<svg style="left:417px;top:264px" width="11" height="10" viewBox="0 0 11 10" fill="none" stroke="#5a5a5a" stroke-width=".9"><path d="M1.4 1 V9 M.2 2.4 L1.4 1 L2.6 2.4 M.2 7.6 L1.4 9 L2.6 7.6"/><ellipse cx="7" cy="4.6" rx="3.4" ry="2.6"/><path d="M4 9 H10"/></svg>
<div class="a" style="left:429px;top:264px;width:42px;height:11px;background:#2f2f2f;border:1px solid #393939;border-radius:1px"></div>
<svg style="left:463px;top:267.5px" width="6" height="5" viewBox="0 0 6 5"><path d="M.8 1 L3 3.4 L5.2 1" fill="none" stroke="#4c4c4c" stroke-width="1.1"/></svg>
<svg style="left:377px;top:261px" width="10" height="8" viewBox="0 0 10 8" stroke="#cfcfcf" stroke-width=".7">
 <rect x=".4" y=".4" width="2.6" height="2.2" fill="#3a3a3a"/><rect x="3.2" y=".4" width="2.6" height="2.2" fill="#eee"/><path d="M6.4 .6 L8.4 .6 L7.4 2.2Z" fill="#cfcfcf" stroke="none"/>
 <rect x="6" y="4.6" width="2.6" height="2.2" fill="#3a3a3a"/><rect x="3.2" y="4.6" width="2.6" height="2.2" fill="#eee"/><path d="M.6 5.6 L2.4 4.6 L2.4 6.6Z" fill="#cfcfcf" stroke="none"/>
</svg>
<svg style="left:445px;top:281px" width="5" height="5" viewBox="0 0 5 5"><path d="M2.5 .3 L4.7 2.5 L2.5 4.7 L.3 2.5Z" fill="#2a2a2a" stroke="#d8d8d8" stroke-width=".8"/></svg>
<div class="a" style="left:380px;top:286px;width:136.5px;height:7.8px;background:linear-gradient(to right,#ffffff,#2a1e1b);"></div>
<svg style="left:524.5px;top:287px" width="7" height="8" viewBox="0 0 7 8" fill="none" stroke="#505050" stroke-width=".9"><path d="M.4 1.8 H6.6 M1.2 1.8 V7.4 H5.8 V1.8 M2.4 .6 H4.6"/></svg>
<svg style="left:374px;top:291px" width="150" height="13" viewBox="374 291 150 13">
 <circle cx="380" cy="297.5" r="2" fill="#fff"/>
 <circle cx="380" cy="297.5" r="3.3" fill="none" stroke="#dcdcdc" stroke-width=".7"/>
 <circle cx="516" cy="297.4" r="2.8" fill="#0c0c1c" stroke="#f6f8ff" stroke-width="1.9"/>
 <circle cx="516" cy="297.4" r="4.2" fill="none" stroke="#3458b4" stroke-width=".8"/>
</svg>
<div class="a" style="left:521px;top:337.5px;width:17px;height:22.5px;background:#3a3a3a;"></div>
<div class="a" style="left:528px;top:337.5px;width:9.5px;height:22.5px;background:#373737;"></div>
<svg style="left:529.5px;top:352.5px" width="6" height="4" viewBox="0 0 6 4"><path d="M.5 .6 L3 3.2 L5.5 .6" fill="none" stroke="#9a9a9a" stroke-width=".9"/></svg>
<div class="a" style="left:521px;top:360px;width:17px;height:11px;background:#323232;"></div>
<div class="a" style="left:528.5px;top:360px;width:1px;height:11px;background:#2a2a2a;"></div>
<svg style="left:521.5px;top:362px" width="4" height="6" viewBox="0 0 4 6"><path d="M.8 .6 L3.2 3 L.8 5.4" fill="none" stroke="#8a8a8a" stroke-width=".9"/></svg>
<!-- SWATCH POPUP -->
<div class="a" style="left:335.5px;top:304px;width:186.5px;height:134px;background:#242424;border-radius:1px"></div>
<div class="a" style="left:336.5px;top:305px;width:184.5px;height:132.2px;background:#323232;"></div>
<svg style="left:360.8px;top:314.8px" width="30.8" height="10.5"><text x="0" y="6.75" textLength="30.8" lengthAdjust="spacingAndGlyphs" font-size="7.5" fill="#bdbdbd" >不透明度 :</text></svg>
<div class="a" style="left:393.8px;top:313px;width:38.2px;height:13.2px;background:#1f3558;border-radius:2px"></div>
<div class="a" style="left:394.4px;top:313.6px;width:28px;height:12px;background:#f4f4f4;border:1px solid #2a5cae;border-radius:1px"></div>
<div class="a" style="left:396px;top:315.2px;width:19.5px;height:9px;background:#1f6ad6;"></div>
<div class="t" style="left:396.5px;top:316px;font-size:8px;color:#fff;letter-spacing:-.2px">100%</div>
<div class="a" style="left:422.4px;top:313.6px;width:9px;height:12px;background:#222;border:1px solid #2a5cae;border-left:none;border-radius:0 1px 1px 0"></div>
<svg style="left:424px;top:317.5px" width="6" height="5" viewBox="0 0 6 5"><path d="M.8 1 L3 3.4 L5.2 1" fill="none" stroke="#d8d8d8" stroke-width="1.1"/></svg>
<div class="a" style="left:359.5px;top:327px;width:132.5px;height:93.4px;background:#343434;border:1px solid #2c2c2c"></div>
<svg style="left:342px;top:332.4px" width="11.6" height="9" viewBox="0 0 11.6 9"><ellipse cx="5.8" cy="4.5" rx="5.5" ry="4" fill="#d8d8d8"/><circle cx="8.4" cy="6" r="1.3" fill="#323232"/><circle cx="3" cy="3.4" r=".8" fill="#323232"/><circle cx="5.4" cy="2.3" r=".8" fill="#323232"/><circle cx="8" cy="2.8" r=".8" fill="#323232"/><circle cx="3.2" cy="5.8" r=".8" fill="#323232"/></svg>
<div class="a" style="left:340px;top:349px;width:16px;height:16px;background:#1e1e1e;border-radius:1.5px"></div>
<svg style="left:343px;top:353.5px" width="10" height="7" viewBox="0 0 10 7"><rect x="0" y="0" width="10" height="7" fill="#d8d8d8"/><path d="M3.3 0 V7 M6.7 0 V7 M0 3.5 H10" stroke="#1e1e1e" stroke-width=".7"/><rect x=".6" y=".6" width="2.2" height="2.4" fill="#444"/><rect x="7.2" y="4" width="2.2" height="2.4" fill="#444"/></svg>
<svg style="left:343px;top:370px" width="11" height="11" viewBox="-5.5 -5.5 11 11" fill="none" stroke="#d0d0d0" stroke-linejoin="round" stroke-linecap="round"><path d="M-4.6 4.6 L-4 2.6 L0.6 -2 L2.2 -0.4 L-2.4 4.2 Z" stroke-width=".9"/><path d="M0.4 -3 L3.2 -0.2 M1.6 -1.6 L3.4 -3.6 Q4.8 -4.8 4 -3 L2.4 -1" stroke-width="1.4"/></svg>
<svg style="left:0;top:0" width="760" height="444" viewBox="0 0 760 444">
<rect x="359.9" y="328.7" width="7.15" height="7.3" fill="#ffffff"/>
<rect x="367.63" y="328.7" width="7.15" height="7.3" fill="#231815"/>
<rect x="375.36" y="328.7" width="7.15" height="7.3" fill="#e60012"/>
<rect x="383.09" y="328.7" width="7.15" height="7.3" fill="#fff100"/>
<rect x="390.82" y="328.7" width="7.15" height="7.3" fill="#009944"/>
<rect x="398.55" y="328.7" width="7.15" height="7.3" fill="#00a0e9"/>
<rect x="406.28" y="328.7" width="7.15" height="7.3" fill="#1d2088"/>
<rect x="414.01" y="328.7" width="7.15" height="7.3" fill="#e4007f"/>
<rect x="421.74" y="328.7" width="7.15" height="7.3" fill="#d7102a"/>
<rect x="429.47" y="328.7" width="7.15" height="7.3" fill="#e83820"/>
<rect x="437.2" y="328.7" width="7.15" height="7.3" fill="#ee6a1c"/>
<rect x="444.93" y="328.7" width="7.15" height="7.3" fill="#f39800"/>
<rect x="452.66" y="328.7" width="7.15" height="7.3" fill="#f8b62d"/>
<rect x="460.39" y="328.7" width="7.15" height="7.3" fill="#fff100"/>
<rect x="468.12" y="328.7" width="7.15" height="7.3" fill="#d9e021"/>
<rect x="475.85" y="328.7" width="7.15" height="7.3" fill="#8fc31f"/>
<rect x="359.9" y="336.6" width="7.15" height="7.3" fill="#22ac38"/>
<rect x="367.63" y="336.6" width="7.15" height="7.3" fill="#009944"/>
<rect x="375.36" y="336.6" width="7.15" height="7.3" fill="#006934"/>
<rect x="383.09" y="336.6" width="7.15" height="7.3" fill="#13ae67"/>
<rect x="390.82" y="336.6" width="7.15" height="7.3" fill="#00a29a"/>
<rect x="398.55" y="336.6" width="7.15" height="7.3" fill="#2ea7e0"/>
<rect x="406.28" y="336.6" width="7.15" height="7.3" fill="#036eb8"/>
<rect x="414.01" y="336.6" width="7.15" height="7.3" fill="#1b3b9c"/>
<rect x="421.74" y="336.6" width="7.15" height="7.3" fill="#1d2088"/>
<rect x="429.47" y="336.6" width="7.15" height="7.3" fill="#601986"/>
<rect x="437.2" y="336.6" width="7.15" height="7.3" fill="#920783"/>
<rect x="444.93" y="336.6" width="7.15" height="7.3" fill="#be0081"/>
<rect x="452.66" y="336.6" width="7.15" height="7.3" fill="#e4007f"/>
<rect x="460.39" y="336.6" width="7.15" height="7.3" fill="#e5006a"/>
<rect x="468.12" y="336.6" width="7.15" height="7.3" fill="#d3c3a0"/>
<rect x="475.85" y="336.6" width="7.15" height="7.3" fill="#a98e75"/>
<rect x="359.9" y="344.7" width="7.15" height="7.3" fill="#8c7256"/>
<rect x="367.63" y="344.7" width="7.15" height="7.3" fill="#6a4d38"/>
<rect x="375.36" y="344.7" width="7.15" height="7.3" fill="#d4a35c"/>
<rect x="383.09" y="344.7" width="7.15" height="7.3" fill="#b07a3c"/>
<rect x="390.82" y="344.7" width="7.15" height="7.3" fill="#96591e"/>
<rect x="398.55" y="344.7" width="7.15" height="7.3" fill="#7f4a12"/>
<rect x="406.28" y="344.7" width="7.15" height="7.3" fill="#6a3906"/>
<rect x="414.01" y="344.7" width="7.15" height="7.3" fill="#42210b"/>
<rect x="367.65" y="353.2" width="7.15" height="7.3" fill="#231815"/>
<rect x="375.38" y="353.2" width="7.15" height="7.3" fill="#3e3a39"/>
<rect x="383.11" y="353.2" width="7.15" height="7.3" fill="#595757"/>
<rect x="390.84" y="353.2" width="7.15" height="7.3" fill="#727171"/>
<rect x="398.57" y="353.2" width="7.15" height="7.3" fill="#898989"/>
<rect x="406.3" y="353.2" width="7.15" height="7.3" fill="#9fa0a0"/>
<rect x="414.03" y="353.2" width="7.15" height="7.3" fill="#b5b5b6"/>
<rect x="421.76" y="353.2" width="7.15" height="7.3" fill="#c9caca"/>
<rect x="429.49" y="353.2" width="7.15" height="7.3" fill="#dcdddd"/>
<rect x="437.22" y="353.2" width="7.15" height="7.3" fill="#efefef"/>
<rect x="444.95" y="353.2" width="7.15" height="7.3" fill="#ffffff"/>
<rect x="367.65" y="361.8" width="7.15" height="7.3" fill="#e60012"/>
<rect x="375.38" y="361.8" width="7.15" height="7.3" fill="#f0830a"/>
<rect x="383.11" y="361.8" width="7.15" height="7.3" fill="#fff100"/>
<rect x="390.84" y="361.8" width="7.15" height="7.3" fill="#009944"/>
<rect x="398.57" y="361.8" width="7.15" height="7.3" fill="#1c3d9e"/>
<rect x="406.3" y="361.8" width="7.15" height="7.3" fill="#8e3a97"/>
</svg>
<svg style="left:360.4px;top:354.4px" width="6" height="6" viewBox="0 0 6 6"><path d="M.2 1 H2.4 L3 1.8 H5.8 V5.6 H.2Z" fill="#c8c8c8"/></svg>
<svg style="left:360.4px;top:363px" width="6" height="6" viewBox="0 0 6 6"><path d="M.2 1 H2.4 L3 1.8 H5.8 V5.6 H.2Z" fill="#c8c8c8"/></svg>
<svg style="left:466.5px;top:425.5px" width="7" height="7" viewBox="0 0 7 7" fill="none" stroke="#d0d0d0" stroke-width=".9"><rect x=".5" y=".5" width="6" height="6" rx=".6"/><path d="M3.5 2 V5 M2 3.5 H5"/></svg>
<svg style="left:480.5px;top:425px" width="7" height="8" viewBox="0 0 7 8" fill="none" stroke="#505050" stroke-width=".9"><path d="M.4 1.8 H6.6 M1.2 1.8 V7.4 H5.8 V1.8 M2.4 .6 H4.6"/></svg>
</div>
</body>
</html>
